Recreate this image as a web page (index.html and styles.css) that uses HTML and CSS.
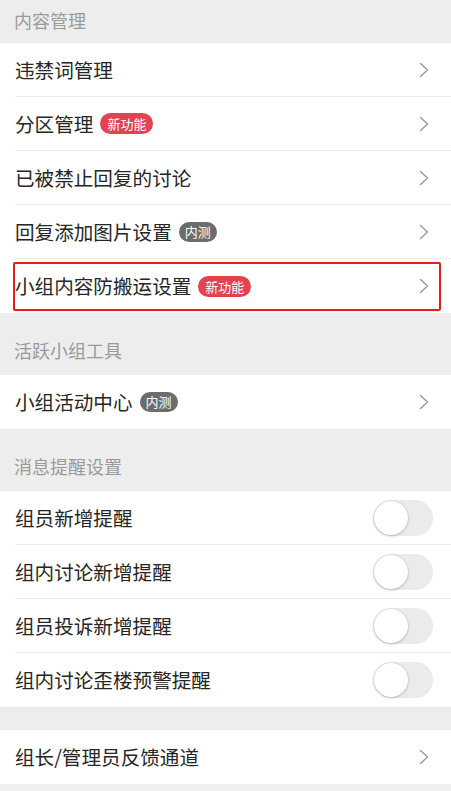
FILE: index.html
```html
<!DOCTYPE html>
<html lang="zh-CN">
<head>
<meta charset="utf-8">
<title>小组管理设置</title>
<link rel="stylesheet" href="styles.css">
</head>
<body>
<div class="page">
  <div class="section-title first">内容管理</div>
  <div class="group">
    <div class="row"><span class="label">违禁词管理</span><svg class="chev" viewBox="0 0 10 16"><path d="M1.5 1.5 L8.5 8 L1.5 14.5"/></svg></div>
    <div class="row"><span class="label">分区管理</span><span class="badge red">新功能</span><svg class="chev" viewBox="0 0 10 16"><path d="M1.5 1.5 L8.5 8 L1.5 14.5"/></svg></div>
    <div class="row"><span class="label">已被禁止回复的讨论</span><svg class="chev" viewBox="0 0 10 16"><path d="M1.5 1.5 L8.5 8 L1.5 14.5"/></svg></div>
    <div class="row"><span class="label">回复添加图片设置</span><span class="badge gray">内测</span><svg class="chev" viewBox="0 0 10 16"><path d="M1.5 1.5 L8.5 8 L1.5 14.5"/></svg></div>
    <div class="row highlighted"><span class="label">小组内容防搬运设置</span><span class="badge red">新功能</span><svg class="chev" viewBox="0 0 10 16"><path d="M1.5 1.5 L8.5 8 L1.5 14.5"/></svg><div class="mark"></div></div>
  </div>

  <div class="section-title">活跃小组工具</div>
  <div class="group">
    <div class="row"><span class="label">小组活动中心</span><span class="badge gray">内测</span><svg class="chev" viewBox="0 0 10 16"><path d="M1.5 1.5 L8.5 8 L1.5 14.5"/></svg></div>
  </div>

  <div class="section-title">消息提醒设置</div>
  <div class="group">
    <div class="row toggle-row"><span class="label">组员新增提醒</span><span class="switch"><span class="knob"></span></span></div>
    <div class="row toggle-row"><span class="label">组内讨论新增提醒</span><span class="switch"><span class="knob"></span></span></div>
    <div class="row toggle-row"><span class="label">组员投诉新增提醒</span><span class="switch"><span class="knob"></span></span></div>
    <div class="row toggle-row"><span class="label">组内讨论歪楼预警提醒</span><span class="switch"><span class="knob"></span></span></div>
  </div>

  <div class="spacer"></div>
  <div class="group">
    <div class="row"><span class="label">组长/管理员反馈通道</span><svg class="chev" viewBox="0 0 10 16"><path d="M1.5 1.5 L8.5 8 L1.5 14.5"/></svg></div>
  </div>
</div>
</body>
</html>
```

FILE: styles.css
```css
html, body {
  margin: 0;
  padding: 0;
  background: #efefef;
}

.page {
  width: 451px;
  font-family: "Noto Sans CJK SC", "Noto Sans", sans-serif;
  background: #efefef;
}

.section-title {
  box-sizing: border-box;
  height: 62px;
  padding: 25px 0 0 14px;
  font-size: 18px;
  line-height: 24px;
  color: #9a9a9a;
  background: #ededed;
}

.section-title.first {
  height: 43px;
  padding-top: 8px;
}

.group {
  background: #ffffff;
}

.row {
  box-sizing: border-box;
  height: 54px;
  margin-left: 15px;
  padding-right: 22px;
  display: flex;
  align-items: center;
  border-bottom: 1px solid #ececec;
}

.row:last-child {
  border-bottom: none;
}

.label {
  font-size: 19.6px;
  line-height: 26px;
  color: #262626;
  white-space: nowrap;
}

.badge {
  margin-left: 7px;
  height: 21px;
  border-radius: 11px;
  padding: 0 7px;
  font-size: 13px;
  line-height: 21px;
  color: #ffffff;
  white-space: nowrap;
}

.badge.red {
  background: #e2434f;
}

.badge.gray {
  background: #6c6c6c;
  padding: 0 6px;
  height: 20px;
  line-height: 20px;
  border-radius: 10px;
}

.chev {
  margin-left: auto;
  width: 10px;
  height: 16px;
  fill: none;
  stroke: #9c9c9c;
  stroke-width: 1.5;
  stroke-linecap: round;
  stroke-linejoin: round;
}

.toggle-row {
  padding-right: 18px;
}

.switch {
  margin-left: auto;
  box-sizing: border-box;
  width: 60px;
  height: 36px;
  border-radius: 18px;
  background: #ebebeb;
  display: flex;
  align-items: center;
  padding-left: 1px;
}

.knob {
  width: 34px;
  height: 34px;
  border-radius: 50%;
  background: #ffffff;
  box-shadow: 0 1px 3px rgba(0, 0, 0, 0.22), 0 0 0 0.5px rgba(0, 0, 0, 0.06);
}

.highlighted {
  position: relative;
}

.mark {
  position: absolute;
  left: -2px;
  top: 3px;
  right: 10px;
  bottom: 2px;
  border: 2px solid #e21e1e;
  border-radius: 2px;
  pointer-events: none;
}

.spacer {
  height: 23px;
  background: #ededed;
}
```
